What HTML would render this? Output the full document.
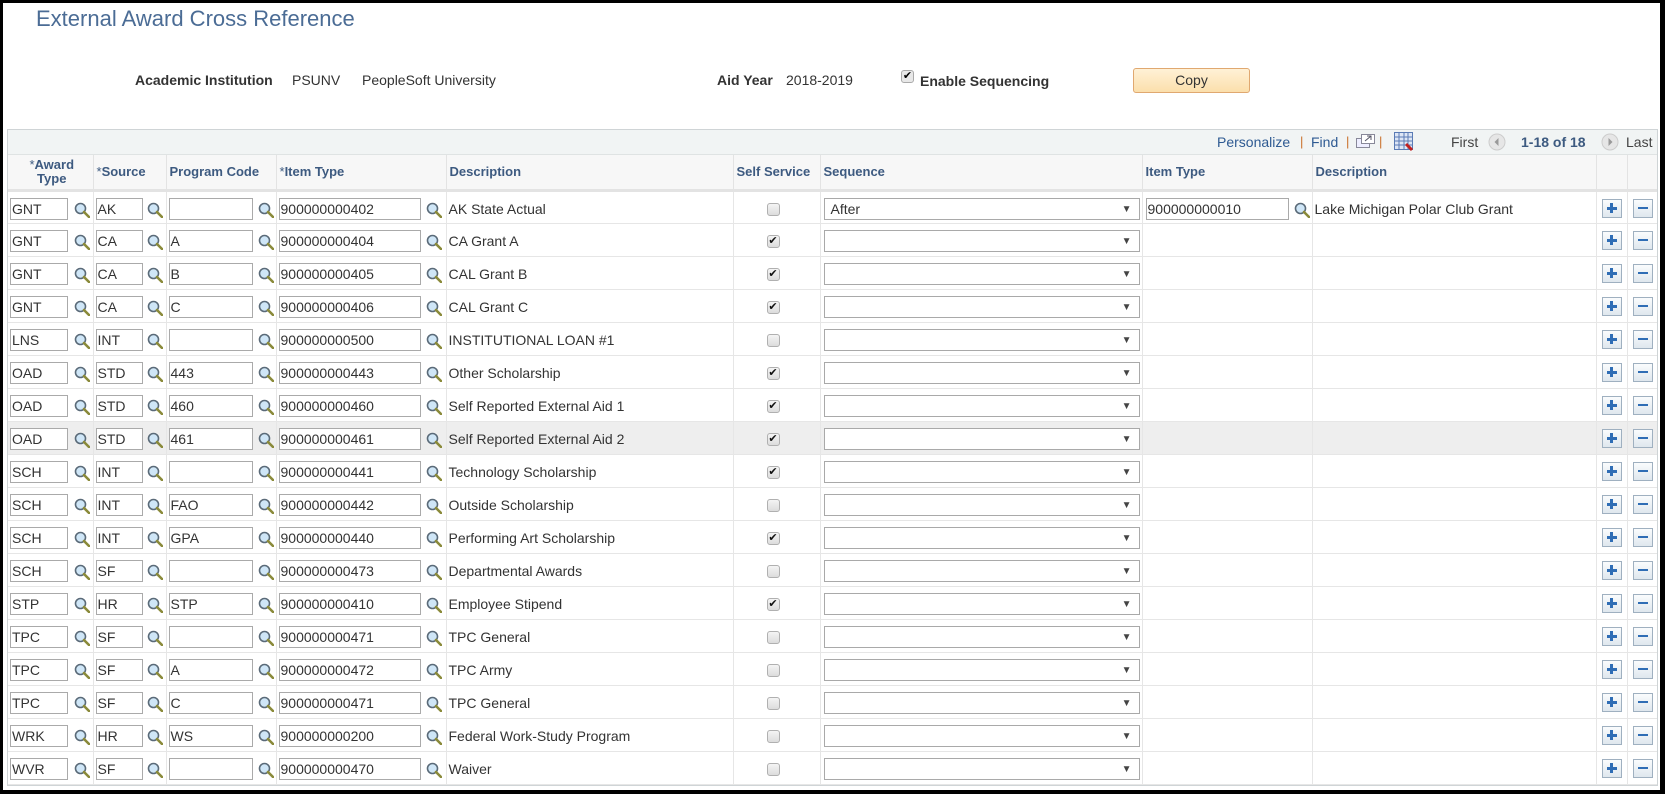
<!DOCTYPE html>
<html><head><meta charset="utf-8"><style>
*{box-sizing:border-box}
html,body{margin:0;padding:0;width:1665px;height:794px;overflow:hidden;background:#fff;font-family:"Liberation Sans",Arial,sans-serif}
#frame{position:absolute;left:0;top:0;width:1665px;height:794px;border:3px solid #000;border-right-width:5px;border-bottom-width:4px}
.abs{position:absolute}
.title{left:36px;top:6px;font-size:22px;color:#4b6c95}
.lbl{font-size:14px;font-weight:bold;color:#333}
.val{font-size:14px;color:#333}
.copy{left:1133px;top:68px;width:117px;height:25px;border:1px solid #e0a870;border-radius:3px;background:linear-gradient(#fff1d6,#fbdfac);font-size:14px;color:#333;text-align:center;line-height:23px}
#grid{position:absolute;left:7px;top:129px;width:1651px;border:1px solid #cfd4d6}
.tb{height:25px;background:#f1f4f4;border-bottom:1px solid #dfe3e3;position:relative;font-size:14px}
.tb span{position:absolute;top:4px}
.lnk{color:#2e5a92}
.sep{color:#c9702a;font-size:13px}
table{border-collapse:collapse;table-layout:fixed;width:1649px}
th{height:35px;background:#f7f7f7;color:#3d5a80;font-size:13px;font-weight:bold;text-align:left;padding:0 0 0 3px;border-right:1px solid #e3e3e3;border-bottom:3px solid #e3e3e3;line-height:14px}
td{height:33px;padding:0;border-right:1px solid #e6e6e6;border-bottom:1px solid #e6e6e6;font-size:14px;color:#333;position:relative}
tr.hl td{background:#eee}
.in{position:absolute;top:6px;height:22px;border:1px solid #aaa;background:#fff;font-size:14px;line-height:20px;padding-left:1px;color:#333}
.mg{position:absolute;top:10px}
.cb{position:absolute;left:33px;top:11px;width:13px;height:13px;border:1px solid #b0b0b0;border-radius:3px;background:linear-gradient(#f4f4f4,#dcdcdc);font-size:11px;line-height:11px;text-align:center;color:#111}
.sel{position:absolute;left:3px;top:6px;width:316px;height:22px;border:1px solid #a9a9a9;background:#fff;font-size:14px;line-height:20px;padding-left:6px}
.sel:after{content:"\25BC";position:absolute;right:7px;top:1px;font-size:10px;color:#444}
.btn{position:absolute;left:5px;top:7px;width:20px;height:19px;border:1px solid #9fb0c0;background:linear-gradient(#fafcfd,#dfe7ee)}
.pl:before{content:"";position:absolute;left:4px;top:7px;width:10px;height:3px;background:#2f6db5}
.pl:after{content:"";position:absolute;left:7.5px;top:3.5px;width:3px;height:10px;background:#2f6db5}
.mi:before{content:"";position:absolute;left:4px;top:7.5px;width:10px;height:2px;background:#2f6db5}
.desc{position:absolute;left:2px;top:9px;white-space:nowrap}
.st{color:#3d5a80;font-weight:normal}
</style></head><body>
<div id="frame"></div>
<div class="abs title">External Award Cross Reference</div>
<div class="abs lbl" style="left:135px;top:72px">Academic Institution</div>
<div class="abs val" style="left:292px;top:72px">PSUNV</div>
<div class="abs val" style="left:362px;top:72px">PeopleSoft University</div>
<div class="abs lbl" style="left:717px;top:72px">Aid Year</div>
<div class="abs val" style="left:786px;top:72px">2018-2019</div>
<div class="abs" style="left:901px;top:70px;width:13px;height:13px;border:1px solid #aaa;border-radius:3px;background:#e8e8e8;font-size:11px;line-height:11px;text-align:center">&#10004;</div>
<div class="abs lbl" style="left:920px;top:73px">Enable Sequencing</div>
<div class="abs copy">Copy</div>
<svg width="0" height="0" style="position:absolute"><defs>
<g id="m"><circle cx="6.5" cy="6.5" r="5" fill="#cfe6f7" stroke="#5a6a78" stroke-width="1.6"/><line x1="10" y1="10" x2="15" y2="15" stroke="#8a8a3a" stroke-width="2.6" stroke-linecap="round"/></g>
</defs></svg>
<div id="grid">
<div class="tb">
<span class="lnk" style="left:1209px">Personalize</span><span class="sep" style="left:1292px">|</span>
<span class="lnk" style="left:1303px">Find</span><span class="sep" style="left:1338px">|</span>
<svg class="abs" style="left:1348px;top:4px" width="19" height="15"><rect x="0.5" y="4.5" width="13" height="9" fill="#eef" stroke="#889"/><rect x="5.5" y="0.5" width="13" height="9" fill="#fff" stroke="#889"/><path d="M9 7 L15 2 M11 2 H15 V6" stroke="#556" fill="none"/></svg>
<span class="sep" style="left:1371px">|</span>
<svg class="abs" style="left:1386px;top:2px" width="20" height="20"><rect x="0.5" y="0.5" width="18" height="17" fill="#dde6f5" stroke="#5a7bb5"/><path d="M0 5H19M0 9H19M0 13H19M5 0V18M10 0V18M14 0V18" stroke="#5a7bb5"/><path d="M12 12L18 18" stroke="#c02020" stroke-width="3"/></svg>
<span style="left:1443px;color:#444">First</span>
<svg class="abs" style="left:1480px;top:3px" width="18" height="18"><circle cx="9" cy="9" r="8" fill="#e6e6e6" stroke="#ccc"/><path d="M10.5 5L6.5 9L10.5 13Z" fill="#999"/></svg>
<span style="left:1513px;font-weight:bold;color:#3d5a80">1-18 of 18</span>
<svg class="abs" style="left:1593px;top:3px" width="18" height="18"><circle cx="9" cy="9" r="8" fill="#e6e6e6" stroke="#ccc"/><path d="M7.5 5L11.5 9L7.5 13Z" fill="#999"/></svg>
<span style="left:1618px;color:#444">Last</span>
</div>
<table>
<colgroup><col style="width:85px"><col style="width:73px"><col style="width:110px"><col style="width:170px"><col style="width:287px"><col style="width:87px"><col style="width:322px"><col style="width:170px"><col style="width:284px"><col style="width:31px"><col style="width:30px"></colgroup>
<tr><th style="text-align:center"><span class="st">*</span>Award<br>Type</th><th><span class="st">*</span>Source</th><th>Program Code</th><th><span class="st">*</span>Item Type</th><th>Description</th><th>Self Service</th><th>Sequence</th><th>Item Type</th><th>Description</th><th></th><th style="border-right:0"></th></tr>
<tbody id="rows"></tbody>
</table>
</div>
<script>
var d=[["GNT","AK","","402","AK State Actual",0],["GNT","CA","A","404","CA Grant A",1],["GNT","CA","B","405","CAL Grant B",1],["GNT","CA","C","406","CAL Grant C",1],["LNS","INT","","500","INSTITUTIONAL LOAN #1",0],["OAD","STD","443","443","Other Scholarship",1],["OAD","STD","460","460","Self Reported External Aid 1",1],["OAD","STD","461","461","Self Reported External Aid 2",1],["SCH","INT","","441","Technology Scholarship",1],["SCH","INT","FAO","442","Outside Scholarship",0],["SCH","INT","GPA","440","Performing Art Scholarship",1],["SCH","SF","","473","Departmental Awards",0],["STP","HR","STP","410","Employee Stipend",1],["TPC","SF","","471","TPC General",0],["TPC","SF","A","472","TPC Army",0],["TPC","SF","C","471","TPC General",0],["WRK","HR","WS","200","Federal Work-Study Program",0],["WVR","SF","","470","Waiver",0]];
var m='<svg class="mg" width="16" height="16" style="left:LEFTpx"><use href="#m"/></svg>';
function mg(l){return m.replace("LEFT",l)}
var h="";
d.forEach(function(r,i){
h+='<tr'+(i==7?' class="hl"':'')+'>';
h+='<td><div class="in" style="left:2px;width:58px">'+r[0]+'</div>'+mg(66)+'</td>';
h+='<td><div class="in" style="left:2px;width:47px">'+r[1]+'</div>'+mg(53)+'</td>';
h+='<td><div class="in" style="left:2px;width:84px">'+r[2]+'</div>'+mg(91)+'</td>';
h+='<td><div class="in" style="left:2px;width:142px">900000000'+r[3]+'</div>'+mg(149)+'</td>';
h+='<td><div class="desc">'+r[4]+'</div></td>';
h+='<td><div class="cb">'+(r[5]?'&#10004;':'')+'</div></td>';
h+='<td><div class="sel">'+(i==0?'After':'')+'</div></td>';
h+='<td>'+(i==0?'<div class="in" style="left:3px;width:143px">900000000010</div>'+mg(151):'')+'</td>';
h+='<td>'+(i==0?'<div class="desc">Lake Michigan Polar Club Grant</div>':'')+'</td>';
h+='<td><div class="btn pl"></div></td><td style="border-right:0"><div class="btn mi"></div></td></tr>';
});
document.getElementById("rows").innerHTML=h;
</script>
</body></html>
